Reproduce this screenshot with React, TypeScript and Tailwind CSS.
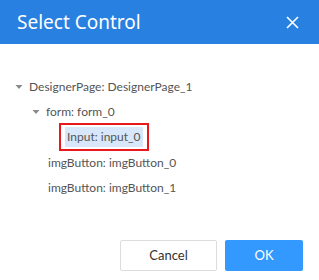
const titleFont = { fontFamily: '"Noto Sans", "Open Sans", sans-serif' };
const bodyFont = { fontFamily: 'Lato, "Noto Sans", sans-serif' };

function Caret() {
  return (
    <svg width="8" height="8" viewBox="0 0 8 8" className="shrink-0">
      <path d="M0.5 2 L7.5 2 L4 6 Z" fill="#8a8a8a" />
    </svg>
  );
}

export default function App() {
  return (
    <div className="w-[319px] h-[280px] bg-white flex flex-col" style={bodyFont}>
      <div className="h-[44px] bg-[#2880e0] flex items-center justify-between pl-[17px] pr-[20px]">
        <span className="text-white text-[19px] leading-none" style={titleFont}>Select Control</span>
        <svg width="13" height="13" viewBox="0 0 13 13">
          <path d="M1 1 L12 12 M12 1 L1 12" stroke="white" strokeWidth="1.6" />
        </svg>
      </div>

      <div className="flex-1 flex flex-col pt-[30px] text-[12px] text-[#555] leading-none">
        <div className="h-[25px] flex items-center gap-[6px] pl-[15px]">
          <Caret />
          <span>DesignerPage: DesignerPage_1</span>
        </div>
        <div className="h-[25px] flex items-center gap-[6px] pl-[32px]">
          <Caret />
          <span>form: form_0</span>
        </div>
        <div className="h-[25px] flex items-center pl-[59px]">
          <div className="h-[28px] border-2 border-[#e8181c] px-[4px] py-[2px] flex">
            <span className="flex items-center bg-[#d8e8fa] px-[2px] text-[#555]">Input: input_0</span>
          </div>
        </div>
        <div className="h-[25px] flex items-center pl-[48px] mt-[1px]">imgButton: imgButton_0</div>
        <div className="h-[25px] flex items-center pl-[48px]">imgButton: imgButton_1</div>
      </div>

      <div className="flex justify-end gap-[8px] pr-[16px] pb-[9px]">
        <button className="w-[97px] h-[31px] border border-[#dcdcdc] rounded-[2px] text-[13px] text-[#333] bg-white">Cancel</button>
        <button className="w-[78px] h-[31px] rounded-[2px] text-[13px] text-white bg-[#3399ff]">OK</button>
      </div>
    </div>
  );
}
